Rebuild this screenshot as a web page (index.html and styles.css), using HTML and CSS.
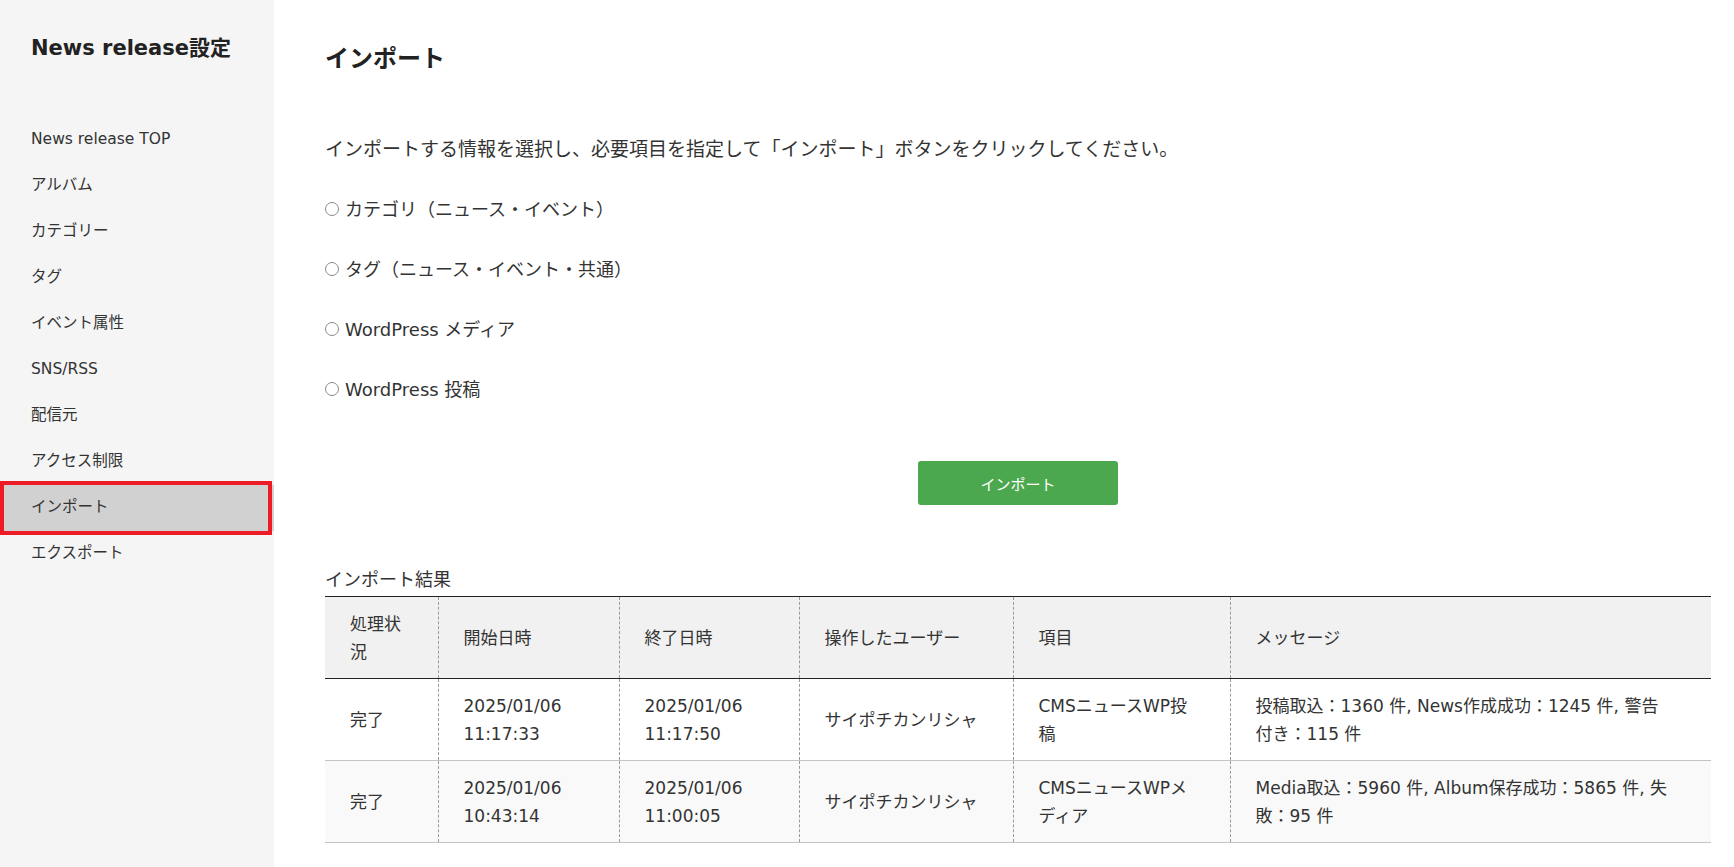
FILE: index.html
```html
<!DOCTYPE html>
<html lang="ja">
<head>
<meta charset="utf-8">
<title>インポート</title>
<link rel="stylesheet" href="styles.css">
</head>
<body>
<div class="layout">
  <aside class="sidebar">
    <h2 class="sidebar-title">News release設定</h2>
    <ul class="menu">
      <li class="menu-item">News release TOP</li>
      <li class="menu-item">アルバム</li>
      <li class="menu-item">カテゴリー</li>
      <li class="menu-item">タグ</li>
      <li class="menu-item">イベント属性</li>
      <li class="menu-item">SNS/RSS</li>
      <li class="menu-item">配信元</li>
      <li class="menu-item">アクセス制限</li>
      <li class="menu-item is-active">インポート<span class="highlight-box"></span></li>
      <li class="menu-item">エクスポート</li>
    </ul>
  </aside>
  <main class="main">
    <h1 class="page-title">インポート</h1>
    <p class="lead">インポートする情報を選択し、必要項目を指定して「インポート」ボタンをクリックしてください。</p>
    <div class="options">
      <label class="option"><input type="radio" name="kind" class="radio">カテゴリ（ニュース・イベント）</label>
      <label class="option"><input type="radio" name="kind" class="radio">タグ（ニュース・イベント・共通）</label>
      <label class="option"><input type="radio" name="kind" class="radio">WordPress メディア</label>
      <label class="option"><input type="radio" name="kind" class="radio">WordPress 投稿</label>
    </div>
    <div class="actions">
      <button class="btn-import" type="button">インポート</button>
    </div>
    <div class="result-caption">インポート結果</div>
    <table class="result-table">
      <colgroup>
        <col class="c-status">
        <col class="c-start">
        <col class="c-end">
        <col class="c-user">
        <col class="c-item">
        <col class="c-msg">
      </colgroup>
      <thead>
        <tr>
          <th>処理状況</th>
          <th>開始日時</th>
          <th>終了日時</th>
          <th>操作したユーザー</th>
          <th class="col-item">項目</th>
          <th class="col-msg">メッセージ</th>
        </tr>
      </thead>
      <tbody>
        <tr>
          <td>完了</td>
          <td>2025/01/06 11:17:33</td>
          <td>2025/01/06 11:17:50</td>
          <td>サイポチカンリシャ</td>
          <td class="col-item">CMSニュースWP投稿</td>
          <td class="col-msg">投稿取込：1360 件, News作成成功：1245 件, 警告付き：115 件</td>
        </tr>
        <tr class="alt">
          <td>完了</td>
          <td>2025/01/06 10:43:14</td>
          <td>2025/01/06 11:00:05</td>
          <td>サイポチカンリシャ</td>
          <td class="col-item">CMSニュースWPメディア</td>
          <td class="col-msg">Media取込：5960 件, Album保存成功：5865 件, 失敗：95 件</td>
        </tr>
      </tbody>
    </table>
  </main>
</div>
</body>
</html>
```

FILE: styles.css
```css
* {
  box-sizing: border-box;
}

html, body {
  margin: 0;
  padding: 0;
  background: #ffffff;
}

body {
  font-family: "DejaVu Sans", "Noto Sans CJK JP", sans-serif;
  color: #333333;
}

.layout {
  display: flex;
  min-height: 100vh;
}

.sidebar {
  width: 274px;
  flex: 0 0 274px;
  background: #f5f5f5;
  padding-top: 32px;
}

.sidebar-title {
  margin: 0 0 53px 31px;
  font-size: 21px;
  line-height: 32px;
  font-weight: 700;
  color: #222222;
}

.menu {
  list-style: none;
  margin: 0;
  padding: 0;
}

.menu-item {
  position: relative;
  height: 46px;
  line-height: 44px;
  padding-left: 31px;
  font-size: 15.5px;
  color: #333333;
}

.menu-item.is-active {
  background: #d1d1d1;
}

.highlight-box {
  position: absolute;
  left: 0;
  right: 2px;
  top: -4px;
  bottom: -4px;
  border: 4px solid #ed1c24;
  pointer-events: none;
}

.main {
  flex: 1;
  min-width: 0;
  padding: 42px 23px 0 51px;
}

.page-title {
  margin: 0;
  font-size: 24px;
  line-height: 34px;
  font-weight: 700;
  color: #222222;
}

.lead {
  margin: 59px 0 0;
  font-size: 19px;
  line-height: 28px;
}

.options {
  display: flex;
  flex-direction: column;
  gap: 32px;
  margin-top: 33px;
}

.option {
  display: flex;
  align-items: center;
  font-size: 18px;
  line-height: 28px;
}

.radio {
  appearance: none;
  -webkit-appearance: none;
  width: 14px;
  height: 14px;
  margin: 0 6px 3px 0;
  border: 1px solid #8a8a8a;
  border-radius: 50%;
  background: #ffffff;
  flex: 0 0 14px;
}

.actions {
  display: flex;
  justify-content: center;
  margin-top: 57px;
}

.btn-import {
  width: 200px;
  height: 44px;
  border: none;
  border-radius: 3px;
  background: #4ca84f;
  color: #ffffff;
  font-family: inherit;
  font-size: 15px;
}

.result-caption {
  margin-top: 63px;
  font-size: 18px;
  line-height: 24px;
  margin-bottom: 4px;
}

.result-table {
  width: 100%;
  table-layout: fixed;
  border-collapse: collapse;
  font-size: 17px;
  line-height: 28px;
}

.c-status { width: 113px; }
.c-start { width: 181px; }
.c-end { width: 180px; }
.c-user { width: 214px; }
.c-item { width: 217px; }
.c-msg { width: auto; }

.result-table th,
.result-table td {
  padding: 13px 25px 12px;
  text-align: left;
  vertical-align: middle;
  font-weight: 400;
  border-left: 1px dashed #9a9a9a;
}

.result-table .col-item {
  padding-right: 36px;
}

.result-table .col-msg {
  padding-right: 40px;
}

.result-table th:first-child,
.result-table td:first-child {
  border-left: none;
}

.result-table thead tr {
  background: #f1f1f1;
  border-top: 1px solid #222222;
  border-bottom: 1px solid #222222;
}

.result-table tbody tr {
  border-bottom: 1px solid #c4c4c4;
}

.result-table tbody tr.alt {
  background: #f9f9f9;
}
```
